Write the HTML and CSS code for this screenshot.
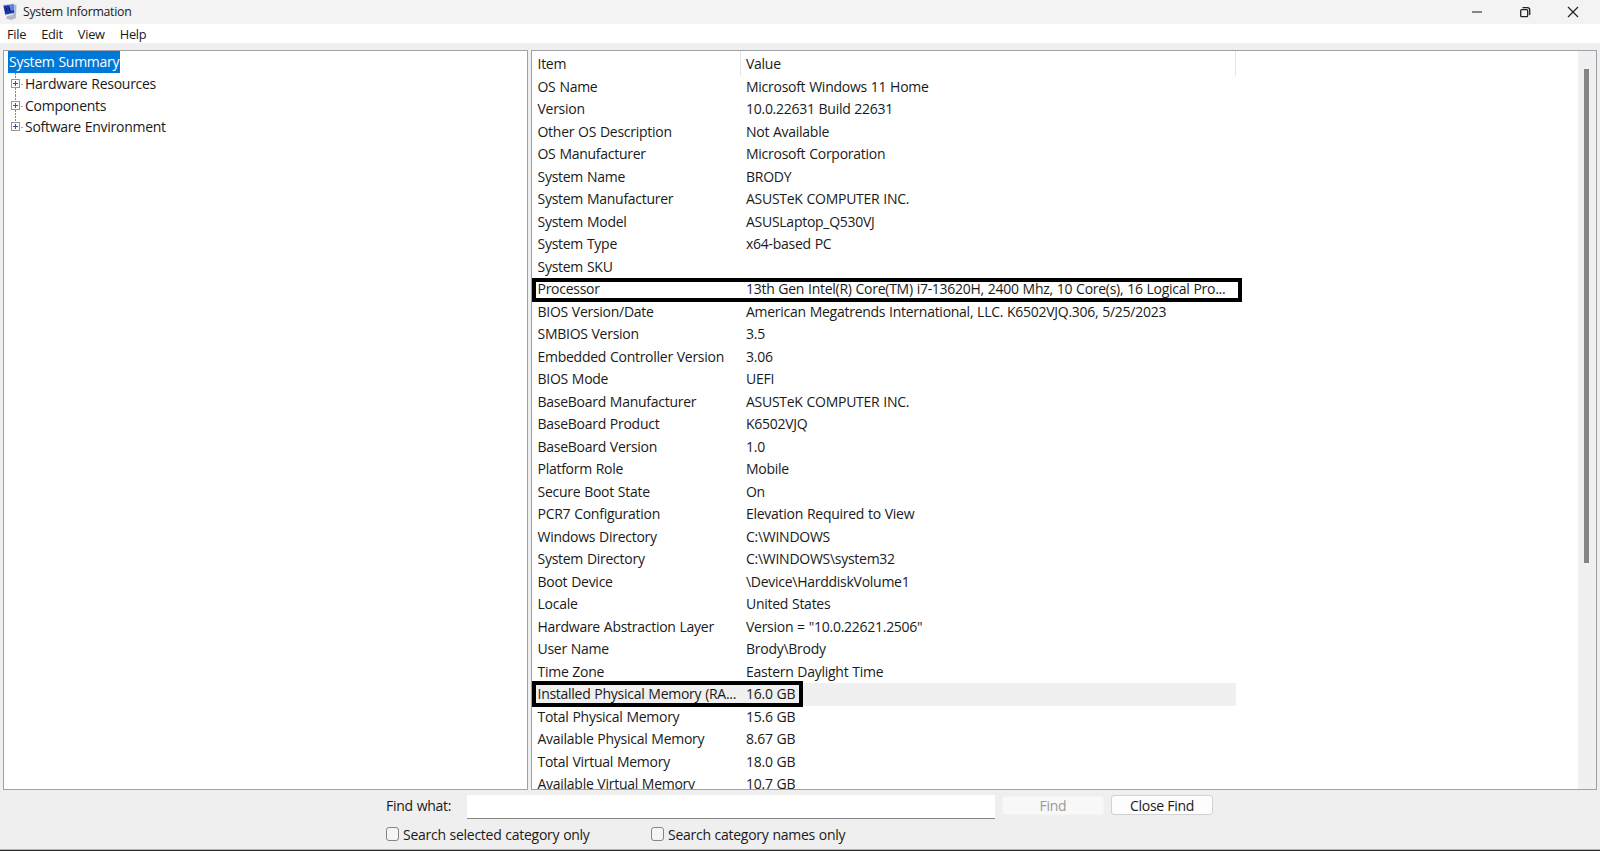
FILE: index.html
```html
<!DOCTYPE html>
<html lang="en">
<head>
    <meta charset="UTF-8">
    <meta name="viewport" content="width=device-width, initial-scale=1.0">
    <title>System Information</title>
    <link rel="stylesheet" href="styles.css">
</head>
<body>
    <div class="window">
        <div class="titlebar">
            <svg class="app-icon" width="16" height="18" viewBox="0 0 16 18">
                <path d="M5 13 L13 11.5 L14.5 15 L9 17 L4 15.5Z" fill="#b4b9c4"/>
                <path d="M11 1 L14.5 2 L14 12.5 L11 13Z" fill="#a9b4d0"/>
                <path d="M1 2 L12 0.5 L13 10.5 L3 12.5Z" fill="#b8c8e8"/>
                <path d="M1.5 2.7 L11.3 1.4 L12.2 9.8 L3.3 11.5Z" fill="#1b35a8"/>
                <path d="M7 2 L11.3 1.4 L11.9 7 L9 8Z" fill="#5c84e0"/>
                <path d="M4 9 L4.5 5 M7 4.5 L8 8.5" stroke="#0a1a70"/>
            </svg>
            <span class="title">System Information</span>
            <div class="window-buttons">
                <svg width="12" height="12" viewBox="0 0 12 12"><path d="M1 6H11" stroke="#555" stroke-width="1.4"/></svg>
                <svg width="12" height="12" viewBox="0 0 12 12"><rect x="1.7" y="3.7" width="7" height="7" rx="1" fill="none" stroke="#222" stroke-width="1.3"/><path d="M3.5 1.6H8.5Q10.7 1.6 10.7 3.8V9" fill="none" stroke="#222" stroke-width="1.3"/></svg>
                <svg width="12" height="12" viewBox="0 0 12 12"><path d="M1 1L11 11M11 1L1 11" stroke="#222" stroke-width="1.2"/></svg>
            </div>
        </div>
        <div class="menubar">
            <span>File</span>
            <span>Edit</span>
            <span>View</span>
            <span>Help</span>
        </div>

        <div class="panels">
            <div class="tree">
                <div class="selected">System Summary</div>
                <div class="node"><i class="plus"></i>Hardware Resources</div>
                <div class="node"><i class="plus"></i>Components</div>
                <div class="node"><i class="plus"></i>Software Environment</div>
            </div>

            <div class="details">
                <div class="list">
                    <div class="row header"><span>Item</span><span>Value</span></div>
                    <div class="row"><span>OS Name</span><span>Microsoft Windows 11 Home</span></div>
                    <div class="row"><span>Version</span><span>10.0.22631 Build 22631</span></div>
                    <div class="row"><span>Other OS Description</span><span>Not Available</span></div>
                    <div class="row"><span>OS Manufacturer</span><span>Microsoft Corporation</span></div>
                    <div class="row"><span>System Name</span><span>BRODY</span></div>
                    <div class="row"><span>System Manufacturer</span><span>ASUSTeK COMPUTER INC.</span></div>
                    <div class="row"><span>System Model</span><span>ASUSLaptop_Q530VJ</span></div>
                    <div class="row"><span>System Type</span><span>x64-based PC</span></div>
                    <div class="row"><span>System SKU</span><span></span></div>
                    <div class="row"><span>Processor</span><span>13th Gen Intel(R) Core(TM) i7-13620H, 2400 Mhz, 10 Core(s), 16 Logical Pro...</span><div class="mark mark-cpu"></div></div>
                    <div class="row"><span>BIOS Version/Date</span><span>American Megatrends International, LLC. K6502VJQ.306, 5/25/2023</span></div>
                    <div class="row"><span>SMBIOS Version</span><span>3.5</span></div>
                    <div class="row"><span>Embedded Controller Version</span><span>3.06</span></div>
                    <div class="row"><span>BIOS Mode</span><span>UEFI</span></div>
                    <div class="row"><span>BaseBoard Manufacturer</span><span>ASUSTeK COMPUTER INC.</span></div>
                    <div class="row"><span>BaseBoard Product</span><span>K6502VJQ</span></div>
                    <div class="row"><span>BaseBoard Version</span><span>1.0</span></div>
                    <div class="row"><span>Platform Role</span><span>Mobile</span></div>
                    <div class="row"><span>Secure Boot State</span><span>On</span></div>
                    <div class="row"><span>PCR7 Configuration</span><span>Elevation Required to View</span></div>
                    <div class="row"><span>Windows Directory</span><span>C:\WINDOWS</span></div>
                    <div class="row"><span>System Directory</span><span>C:\WINDOWS\system32</span></div>
                    <div class="row"><span>Boot Device</span><span>\Device\HarddiskVolume1</span></div>
                    <div class="row"><span>Locale</span><span>United States</span></div>
                    <div class="row"><span>Hardware Abstraction Layer</span><span>Version = "10.0.22621.2506"</span></div>
                    <div class="row"><span>User Name</span><span>Brody\Brody</span></div>
                    <div class="row"><span>Time Zone</span><span>Eastern Daylight Time</span></div>
                    <div class="row active"><span>Installed Physical Memory (RA...</span><span>16.0 GB</span><div class="mark mark-ram"></div></div>
                    <div class="row"><span>Total Physical Memory</span><span>15.6 GB</span></div>
                    <div class="row"><span>Available Physical Memory</span><span>8.67 GB</span></div>
                    <div class="row"><span>Total Virtual Memory</span><span>18.0 GB</span></div>
                    <div class="row"><span>Available Virtual Memory</span><span>10.7 GB</span></div>
                </div>
                <div class="scrollbar"><div class="thumb"></div></div>
            </div>
        </div>

        <div class="findbar">
            <div class="find-row">
                <label for="find">Find what:</label>
                <input type="text" id="find">
                <button class="btn" disabled>Find</button>
                <button class="btn btn-close">Close Find</button>
            </div>
            <div class="check-row">
                <input type="checkbox" id="selected">
                <label class="first" for="selected">Search selected category only</label>
                <input type="checkbox" id="names">
                <label for="names">Search category names only</label>
            </div>
        </div>
    </div>
</body>
</html>
```

FILE: styles.css
```css
* {
    box-sizing: border-box;
}
body {
    margin: 0;
    font-family: "Open Sans", "Noto Sans", sans-serif;
    font-size: 14px;
    letter-spacing: -0.27px;
    word-spacing: 0.5px;
    color: #1a1a1a;
    background-color: #efefef;
}
.window {
    display: flex;
    flex-direction: column;
    height: 851px;
    overflow: hidden;
    border-bottom: 1px solid #2b292c;
    white-space: nowrap;
}
.titlebar {
    display: flex;
    align-items: center;
    height: 24px;
    padding: 0 21px 1px 2px;
    background-color: #f3f3f3;
}
.title {
    margin-left: 5px;
    font-size: 12.3px;
}
.window-buttons {
    display: flex;
    gap: 36px;
    margin-left: auto;
}
.menubar {
    display: flex;
    gap: 15px;
    height: 19px;
    padding-left: 7px;
    line-height: 21px;
    font-size: 12.8px;
    background-color: #fff;
}
.panels {
    display: flex;
    gap: 3px;
    height: 740px;
    margin: 7px 3px 0;
}
.tree {
    width: 525px;
    padding-left: 4px;
    border: 1px solid #a0a0a8;
    background-color: #fff;
}
.selected {
    width: 112px;
    height: 22px;
    padding-left: 1px;
    line-height: 22px;
    color: #fff;
    background-color: #0078d7;
}
.node {
    display: flex;
    align-items: center;
    height: 21.6px;
    padding-left: 3px;
    background: repeating-linear-gradient(#888 0 2px, #fff 2px 3px) 7px 0 / 1px 100% no-repeat,
                linear-gradient(#aaa, #aaa) 13px 11px / 2px 1px no-repeat;
}
.node:last-child {
    background-size: 1px 50%, 2px 1px;
}
.plus {
    width: 9px;
    height: 9px;
    margin-right: 5px;
    border: 1px solid #969696;
    background: linear-gradient(#3b4f9e, #3b4f9e) center / 5px 1px no-repeat,
                linear-gradient(#3b4f9e, #3b4f9e) center / 1px 5px no-repeat, #fff;
}
.details {
    display: flex;
    flex: 1;
    overflow: hidden;
    border: 1px solid #a0a0a8;
    background-color: #fff;
}
.list {
    flex: 1;
}
.row {
    position: relative;
    display: grid;
    grid-template-columns: 208.5px 495px;
    width: 704px;
    height: 22.5px;
    padding-left: 5.5px;
    line-height: 22.5px;
}
.header {
    height: 24.6px;
    line-height: 26px;
    background: linear-gradient(#e5e5e5, #e5e5e5) 208px 0 / 1px 100% no-repeat;
    border-right: 1px solid #e5e5e5;
}
.active {
    background-color: #f0f0f0;
}
/* black frames drawn over the list */
.mark {
    position: absolute;
    left: 0;
    border: 4px solid #000;
}
.mark-cpu {
    top: -0.5px;
    width: 710px;
    height: 24px;
}
.mark-ram {
    top: -2.1px;
    width: 271px;
    height: 26px;
}
.scrollbar {
    width: 18px;
    padding: 18px 0 0 6px;
    background-color: #f0f0f0;
}
.thumb {
    width: 5px;
    height: 494px;
    background-color: #858585;
}
.findbar {
    flex: 1;
    padding: 5px 0 0 386px;
    border-bottom: 1px solid #b5b5b5;
}
.find-row {
    display: flex;
    height: 24px;
}
.find-row label {
    width: 81px;
    line-height: 22px;
}
#find {
    width: 528px;
    height: 24px;
    margin-right: 7px;
    border: none;
    border-bottom: 1px solid #868686;
    background-color: #fff;
}
.btn {
    width: 102px;
    height: 19px;
    margin: 1px 7px 0 0;
    padding: 0;
    border: 1px solid #f4f4f4;
    border-radius: 3px;
    font: inherit;
    line-height: 17px;
    letter-spacing: inherit;
    color: #9a9a9a;
    background-color: #f8f8f8;
}
.btn-close {
    height: 20px;
    margin-top: 0;
    border-color: #d2d2d2;
    color: #1a1a1a;
    background-color: #fdfdfd;
}
.check-row {
    display: flex;
    align-items: center;
    height: 20px;
    margin-top: 5px;
}
.check-row input {
    appearance: none;
    width: 13px;
    height: 14px;
    margin: 0 4px 0 0;
    border: 1px solid #858585;
    border-radius: 3px;
    background-color: #f5f5f5;
}
.check-row .first {
    width: 248px;
}
```
